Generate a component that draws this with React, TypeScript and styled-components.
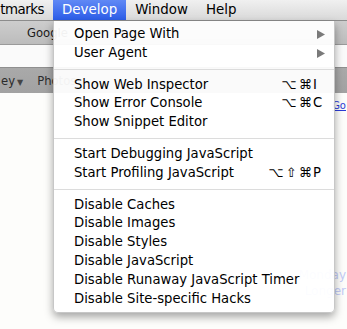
import React from "react";
import styled, { createGlobalStyle } from "styled-components";

const Global = createGlobalStyle`
  html, body { margin: 0; padding: 0; background: #fdfdfb; overflow: hidden; }
  * { box-sizing: border-box; }
`;

const FONT = `"DejaVu Sans", "Liberation Sans", sans-serif`;

const Screen = styled.div`
  position: relative;
  width: 347px;
  height: 329px;
  overflow: hidden;
  display: flex;
  flex-direction: column;
  font-family: ${FONT};
  background: #fdfdfb;
`;

const MenuBar = styled.div`
  height: 21px;
  flex: none;
  display: flex;
  background: linear-gradient(#f0f0f0, #d9d9d9);
  border-bottom: 1px solid #8c8c8c;
`;

const MenuTitle = styled.div<{ $active?: boolean; $first?: boolean }>`
  height: 20px;
  line-height: 20px;
  padding: ${(p) => (p.$first ? "0 9px 0 0" : "0 9px")};
  width: ${(p) => (p.$first ? "53px" : "auto")};
  text-align: right;
  letter-spacing: ${(p) => (p.$first ? "-0.5px" : "0")};
  font-size: 13.4px;
  white-space: nowrap;
  color: ${(p) => (p.$active ? "#fff" : "#000")};
  background: ${(p) => (p.$active ? "linear-gradient(#6089f5, #2c5de8)" : "transparent")};
`;

const BookmarksBar = styled.div`
  height: 24px;
  flex: none;
  display: flex;
  align-items: center;
  padding-left: 27px;
  background: linear-gradient(#cdcdcd, #bcbcbc);
  border-bottom: 1px solid #9a9a9a;
  font-size: 11.6px;
  color: #1a1a1a;
`;

const Strip = styled.div`
  height: 22px;
  flex: none;
  background: #fafafa;
`;

const TabBar = styled.div`
  height: 26px;
  flex: none;
  display: flex;
  align-items: center;
  gap: 14px;
  padding-left: 1px;
  background: linear-gradient(#a9a9a9, #a2a2a2);
  border-top: 1px solid #8f8f8f;
  font-size: 11.6px;
  color: #2b2b2b;
`;

const TabLabel = styled.span`
  white-space: nowrap;
`;

const Caret = styled.span`
  font-size: 8px;
  margin-left: 2px;
  color: #444;
`;

const Content = styled.div`
  flex: 1;
  display: flex;
  flex-direction: column;
  align-items: flex-end;
  background: #fdfdfb;
  padding-top: 7px;
`;

const BlueLink = styled.span`
  font-size: 10px;
  color: #2b3bd6;
  text-decoration: underline;
  margin-right: 1px;
  white-space: nowrap;
`;

const FaintBlock = styled.div`
  margin-top: 156px;
  display: flex;
  flex-direction: column;
  align-items: flex-end;
  padding-right: 1px;
  font-size: 12px;
  line-height: 16px;
  color: #c2cbf6;
  white-space: nowrap;
`;

const Dropdown = styled.div`
  position: absolute;
  left: 53px;
  top: 21px;
  width: 282px;
  padding: 4px 0 4px;
  background: rgba(255, 255, 255, 0.94);
  border: 1px solid rgba(0, 0, 0, 0.22);
  border-top: none;
  border-radius: 0 0 5px 5px;
  box-shadow: 0 4px 9px rgba(0, 0, 0, 0.35);
  font-family: ${FONT};
  font-size: 13.2px;
  color: #000;
`;

const Row = styled.div`
  height: 18.8px;
  line-height: 18.8px;
  display: grid;
  grid-template-columns: 1fr auto 12px;
  padding: 0 9px 0 20px;
  white-space: nowrap;
`;

const Mods = styled.span`
  display: flex;
  gap: 2px;
  justify-content: flex-end;
  padding-right: 1px;
`;

const Key = styled.span`
  display: flex;
  align-items: center;
  justify-content: flex-start;
`;

const ArrowCell = styled.span`
  display: flex;
  align-items: center;
  justify-content: flex-end;
`;

const Separator = styled.div`
  height: 1px;
  margin: 6px 0;
  background: #dcdcdc;
`;

type Item =
  | { sep: true }
  | { label: string; mods?: string[]; keyName?: string; sub?: boolean };

const items: Item[] = [
  { label: "Open Page With", sub: true },
  { label: "User Agent", sub: true },
  { sep: true },
  { label: "Show Web Inspector", mods: ["⌥", "⌘"], keyName: "I" },
  { label: "Show Error Console", mods: ["⌥", "⌘"], keyName: "C" },
  { label: "Show Snippet Editor" },
  { sep: true },
  { label: "Start Debugging JavaScript" },
  { label: "Start Profiling JavaScript", mods: ["⌥", "⇧", "⌘"], keyName: "P" },
  { sep: true },
  { label: "Disable Caches" },
  { label: "Disable Images" },
  { label: "Disable Styles" },
  { label: "Disable JavaScript" },
  { label: "Disable Runaway JavaScript Timer" },
  { label: "Disable Site-specific Hacks" },
];

const SubArrow = () => (
  <svg width="8" height="9" viewBox="0 0 8 9">
    <path d="M0 0 L8 4.5 L0 9 Z" fill="#7a7a7a" />
  </svg>
);

export default function App() {
  return (
    <>
      <Global />
      <Screen>
        <MenuBar>
          <MenuTitle $first>tmarks</MenuTitle>
          <MenuTitle $active>Develop</MenuTitle>
          <MenuTitle>Window</MenuTitle>
          <MenuTitle>Help</MenuTitle>
        </MenuBar>
        <BookmarksBar>Google</BookmarksBar>
        <Strip />
        <TabBar>
          <TabLabel>
            ey<Caret>▼</Caret>
          </TabLabel>
          <TabLabel>Photos</TabLabel>
        </TabBar>
        <Content>
          <BlueLink>Go</BlueLink>
          <FaintBlock>
            <span>Monday</span>
            <span>Longer</span>
          </FaintBlock>
        </Content>
        <Dropdown>
          {items.map((it, i) =>
            "sep" in it ? (
              <Separator key={i} />
            ) : (
              <Row key={i}>
                <span>{it.label}</span>
                <Mods>
                  {(it.mods ?? []).map((m, j) => (
                    <span key={j}>{m}</span>
                  ))}
                </Mods>
                {it.sub ? (
                  <ArrowCell>
                    <SubArrow />
                  </ArrowCell>
                ) : (
                  <Key>{it.keyName ?? ""}</Key>
                )}
              </Row>
            )
          )}
        </Dropdown>
      </Screen>
    </>
  );
}
